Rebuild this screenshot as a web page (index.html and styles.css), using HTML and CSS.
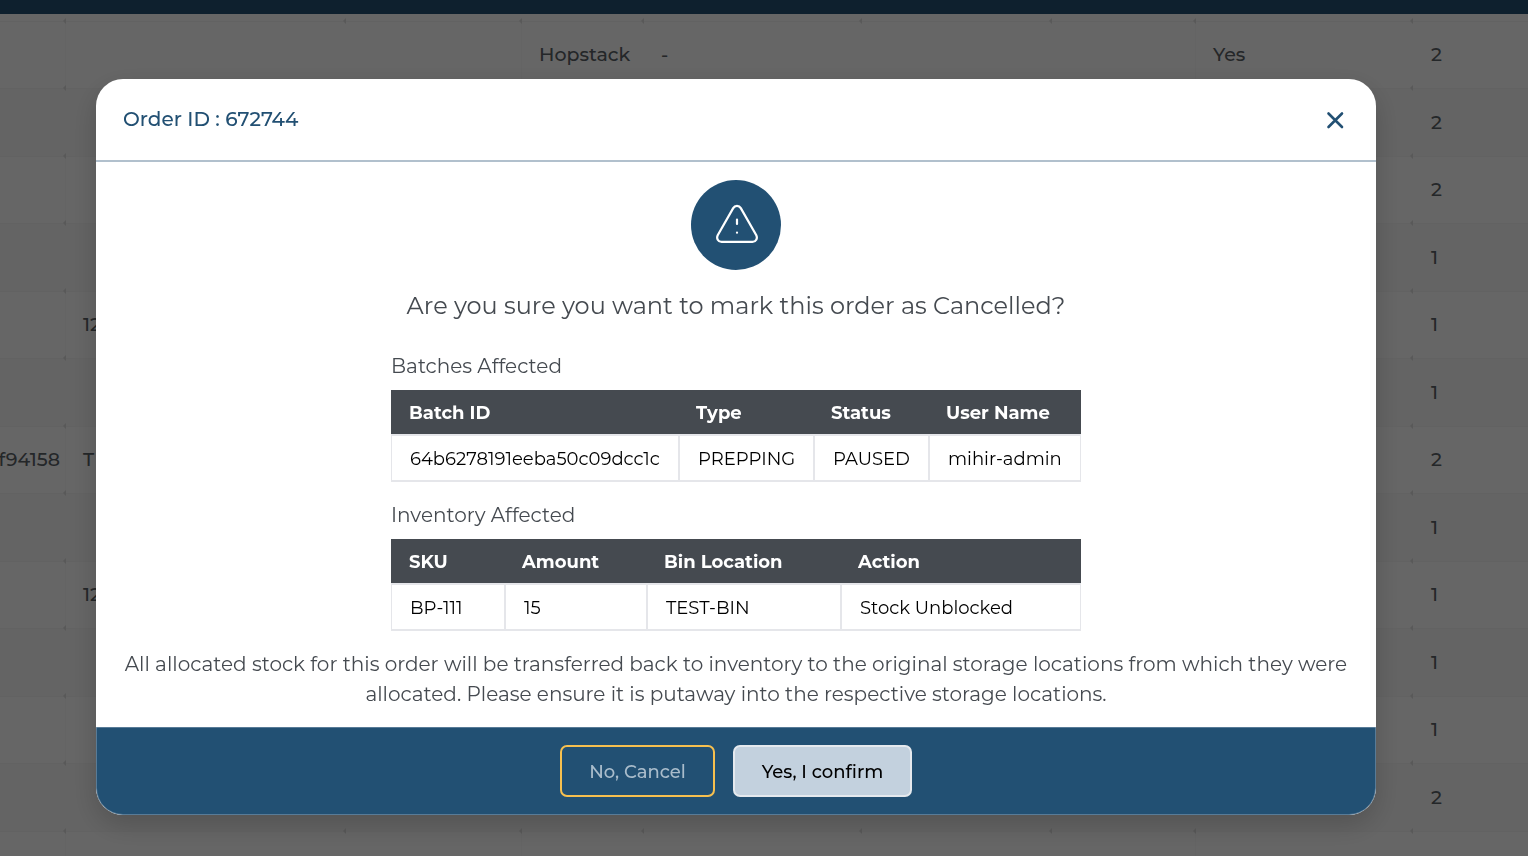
FILE: index.html
```html
<!DOCTYPE html>
<html lang="en">
<head>
<meta charset="utf-8">
<meta name="viewport" content="width=device-width, initial-scale=1">
<title>Order 672744</title>
<link rel="stylesheet" href="styles.css">
</head>
<body>
<div class="page">
  <header class="topbar"></header>
  <table class="orders">
    <colgroup>
      <col class="c-ref"><col class="c-name"><col class="c-group"><col class="c-client"><col class="c-note"><col class="c-state"><col class="c-type"><col class="c-flag"><col>
    </colgroup>
    <tbody>
      <tr><td></td><td></td><td></td><td>Hopstack</td><td>-</td><td></td><td></td><td>Yes</td><td>2</td></tr>
      <tr><td></td><td></td><td></td><td></td><td></td><td></td><td></td><td></td><td>2</td></tr>
      <tr><td></td><td></td><td></td><td></td><td></td><td></td><td></td><td></td><td>2</td></tr>
      <tr><td></td><td></td><td></td><td></td><td></td><td></td><td></td><td></td><td>1</td></tr>
      <tr><td></td><td>12</td><td></td><td></td><td></td><td></td><td></td><td></td><td>1</td></tr>
      <tr><td></td><td></td><td></td><td></td><td></td><td></td><td></td><td></td><td>1</td></tr>
      <tr><td><div class="tail">f94158</div></td><td>T</td><td></td><td></td><td></td><td></td><td></td><td></td><td>2</td></tr>
      <tr><td></td><td></td><td></td><td></td><td></td><td></td><td></td><td></td><td>1</td></tr>
      <tr><td></td><td>12</td><td></td><td></td><td></td><td></td><td></td><td></td><td>1</td></tr>
      <tr><td></td><td></td><td></td><td></td><td></td><td></td><td></td><td></td><td>1</td></tr>
      <tr><td></td><td></td><td></td><td></td><td></td><td></td><td></td><td></td><td>1</td></tr>
      <tr><td></td><td></td><td></td><td></td><td></td><td></td><td></td><td></td><td>2</td></tr>
      <tr><td></td><td></td><td></td><td></td><td></td><td></td><td></td><td></td><td></td></tr>
    </tbody>
  </table>
</div>

<div class="overlay">
  <section class="modal" role="dialog" aria-modal="true" aria-labelledby="modal-title">
    <header class="modal-header">
      <h1 class="modal-title" id="modal-title">Order ID : 672744</h1>
      <button class="close" type="button" aria-label="Close">
        <svg width="18" height="18" viewBox="0 0 18 18" fill="none" stroke="currentColor" stroke-width="2.6" stroke-linecap="round"><path d="M2.500 2.500l13.500 13.500M16 2.500L2.500 16"/></svg>
      </button>
    </header>
    <div class="modal-body">
      <div class="warning">
        <svg width="44" height="42" viewBox="0 0 44 42" fill="none" stroke="currentColor" stroke-width="2.2" stroke-linecap="round" stroke-linejoin="round"><path d="M19.200 4.100 3.700 31.200C2.200 34.400 4 37.900 7.500 37.900h31c3.500 0 5.300-3.500 3.800-6.700L26.800 4.100c-1.700-3-5.900-3-7.600 0z"/><path d="M23 15.500v4.500M23 28.600v.1"/></svg>
      </div>
      <p class="question">Are you sure you want to mark this order as Cancelled?</p>
      <div class="affected">
        <h2 class="label">Batches Affected</h2>
        <table class="data batches">
          <colgroup><col class="b-id"><col class="b-type"><col class="b-status"><col></colgroup>
          <thead><tr><th>Batch ID</th><th>Type</th><th>Status</th><th>User Name</th></tr></thead>
          <tbody><tr><td>64b6278191eeba50c09dcc1c</td><td>PREPPING</td><td>PAUSED</td><td>mihir-admin</td></tr></tbody>
        </table>
        <h2 class="label">Inventory Affected</h2>
        <table class="data">
          <colgroup><col class="i-sku"><col class="i-amount"><col class="i-bin"><col></colgroup>
          <thead><tr><th>SKU</th><th>Amount</th><th>Bin Location</th><th>Action</th></tr></thead>
          <tbody><tr><td>BP-111</td><td>15</td><td>TEST-BIN</td><td>Stock Unblocked</td></tr></tbody>
        </table>
      </div>
      <p class="notice">All allocated stock for this order will be transferred back to inventory to the original storage locations from which they were allocated. Please ensure it is putaway into the respective storage locations.</p>
    </div>
    <footer class="modal-footer">
      <button class="btn btn-cancel" type="button">No, Cancel</button>
      <button class="btn btn-confirm" type="button">Yes, I confirm</button>
    </footer>
  </section>
</div>
</body>
</html>
```
FILE: styles.css
```css
* { box-sizing: border-box; }

body {
  margin: 0;
  font-family: Montserrat, Inter, "Liberation Sans", sans-serif;
  color: #454a50;
}

h1, h2, p { margin: 0; font-weight: 400; }
button { font-family: inherit; cursor: pointer; }

/* Order list behind the dialog */
.page { height: 100vh; overflow: hidden; background: #fff; }
.topbar { height: 14px; background: #255073; margin-bottom: 7px; }

.orders {
  width: 100%;
  table-layout: fixed;
  border-spacing: 0;
  font-size: 19px;
  font-weight: 500;
  color: #5a6166;
}
.orders tr { height: 67px; }
.orders tr:nth-child(even) { height: 68px; background: #f9f9f9; }
.orders td {
  position: relative;
  padding: 0 17px 1px;
  border-top: 1px solid #f6f6f6;
  white-space: nowrap;
}
.orders td:nth-child(2), .orders td:nth-child(4), .orders td:nth-child(8) { border-left: 1px solid #f9f9f9; }
.orders td:last-child { padding-left: 18px; }
.orders td + td::before {
  content: "";
  position: absolute;
  left: -3px;
  top: -4px;
  border: 3px solid transparent;
  border-right-color: #dedede;
  border-left: 0;
}
.orders td:first-child { padding: 0 5px 1px 0; }
.tail { display: flex; justify-content: flex-end; overflow: hidden; }
.c-ref { width: 65px; }
.c-name { width: 281px; }
.c-group { width: 175px; }
.c-client { width: 123px; }
.c-note { width: 218px; }
.c-state { width: 190px; }
.c-type { width: 143px; }
.c-flag { width: 218px; }

/* Dialog */
.overlay {
  position: fixed;
  inset: 0;
  overflow: auto;
  padding: 79px 152px 41px 96px;
  background: rgba(0, 0, 0, .6);
}
.modal {
  background: #fff;
  border-radius: 27px;
  overflow: hidden;
  box-shadow: 0 10px 28px rgba(0, 0, 0, .18);
}
.modal-header {
  display: flex;
  align-items: center;
  justify-content: space-between;
  height: 83px;
  padding: 0 32px 0 27px;
  border-bottom: 2px solid #b1c0cd;
  color: #225073;
}
.modal-title { padding-bottom: 2px; font-size: 20px; line-height: 30px; font-weight: 500; }
.close { display: flex; padding: 0; border: 0; background: none; color: inherit; }

.modal-body {
  display: flex;
  flex-direction: column;
  align-items: center;
  gap: 18px;
  padding: 18px 27px;
}
.warning {
  display: flex;
  align-items: center;
  justify-content: center;
  width: 90px;
  height: 90px;
  border-radius: 50%;
  background: #225073;
  color: #fff;
}
.question { font-size: 24px; line-height: 36px; text-align: center; }
.affected { width: 690px; max-width: 100%; padding-top: 9px; }
.label { margin-bottom: 9px; font-size: 20px; line-height: 30px; }

.data {
  width: 100%;
  table-layout: fixed;
  border-spacing: 0;
  font-size: 18px;
  line-height: 26px;
  text-align: left;
}
.batches { margin-bottom: 18px; }
.data th { padding: 10px 18px 8px; background: #454a50; color: #fff; font-weight: 700; }
.data td {
  padding: 10px 18px 8px;
  border-top: 2px solid #e5e6ea;
  border-bottom: 2px solid #e5e6ea;
  border-left: 2px solid #e5e6ea;
  color: #000;
  white-space: nowrap;
}
.data td:first-child { border-left-width: 1px; }
.data td:last-child { border-right: 1px solid #e5e6ea; }
.b-id { width: 287px; }
.b-type { width: 135px; }
.b-status { width: 115px; }
.i-sku { width: 113px; }
.i-amount { width: 142px; }
.i-bin { width: 194px; }

.notice { font-size: 20px; line-height: 30px; text-align: center; }

.modal-footer {
  display: flex;
  justify-content: center;
  gap: 18px;
  padding: 17px;
  border: 1px solid #587b97;
  border-radius: 0 0 27px 27px;
  background: #225073;
}
.btn {
  height: 52px;
  padding: 2px 24px 0;
  border: 2px solid;
  border-radius: 7px;
  font-size: 18px;
  font-weight: 500;
}
.btn-cancel { min-width: 155px; border-color: #f7c04f; background: none; color: #a9bccb; }
.btn-confirm { min-width: 179px; border-color: #e5e9ee; background: #c3d1de; color: #000; }
```
